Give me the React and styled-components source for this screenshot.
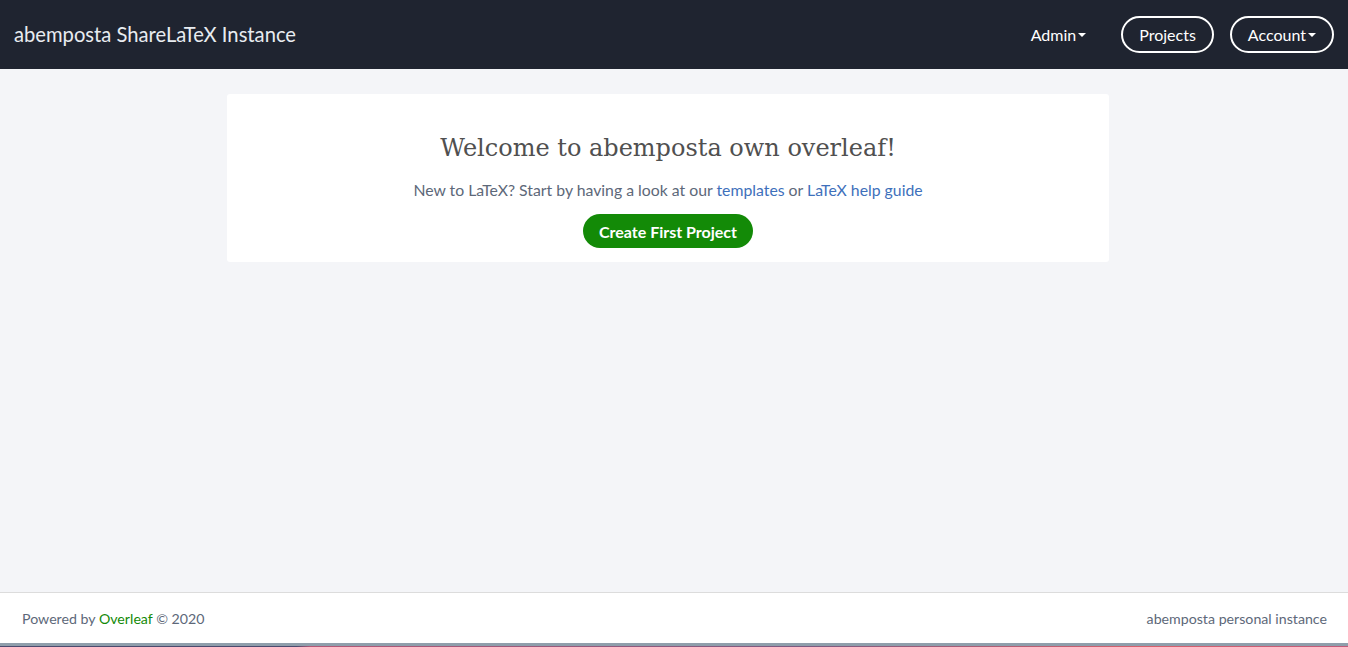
import React from "react";
import styled, { createGlobalStyle } from "styled-components";

const GlobalStyle = createGlobalStyle`
    html, body {
        margin: 0;
        padding: 0;
        height: 100%;
    }
    body {
        font-family: Lato, "Open Sans", sans-serif;
        background-color: #f4f5f8;
    }
    #root {
        height: 100%;
    }
`

const Page = styled.div`
    height: 647px;
    display: flex;
    flex-direction: column;
    overflow: hidden;
`

const Navbar = styled.nav`
    height: 69px;
    flex-shrink: 0;
    background-color: #1f2430;
    display: flex;
    align-items: center;
    justify-content: space-between;
    padding: 0 14px;
    box-sizing: border-box;
`

const Brand = styled.a`
    color: #e8ecf0;
    font-size: 20.2px;
    text-decoration: none;
    margin-top: -2px;
`

const NavList = styled.div`
    display: flex;
    align-items: center;
    gap: 16px;
`

const NavItem = styled.a`
    color: #ffffff;
    font-size: 16px;
    text-decoration: none;
    display: flex;
    align-items: center;
    height: 37px;
    box-sizing: border-box;
    padding: 0 ${p => (p.$outlined ? "16px" : "17px")};
    border: 2px solid ${p => (p.$outlined ? "#ffffff" : "transparent")};
    border-radius: 19px;
`

const Caret = styled.span`
    display: inline-block;
    width: 0;
    height: 0;
    margin-left: 2px;
    margin-top: 1px;
    border-top: 4px solid #ffffff;
    border-left: 4px solid transparent;
    border-right: 4px solid transparent;
`

const Main = styled.main`
    flex: 1;
    display: flex;
    justify-content: center;
    padding: 25px 12px 0 0;
`

const Card = styled.section`
    width: 882px;
    height: 168px;
    box-sizing: border-box;
    background-color: #ffffff;
    border-radius: 3px;
    display: flex;
    flex-direction: column;
    align-items: center;
    padding-top: 37px;
`

const Title = styled.h1`
    margin: 0;
    font-family: "DejaVu Serif", "Liberation Serif", serif;
    font-weight: normal;
    font-size: 24px;
    line-height: 34px;
    color: #505050;
`

const Lead = styled.p`
    margin: 15px 0 0;
    font-size: 15.8px;
    line-height: 20px;
    color: #5d6879;
`

const Link = styled.a`
    color: #3e70bb;
    text-decoration: none;
`

const PrimaryButton = styled.button`
    margin-top: 14px;
    height: 34px;
    padding: 0 16px;
    border: none;
    border-radius: 17px;
    background-color: #138a07;
    color: #ffffff;
    font-family: Lato, sans-serif;
    font-weight: bold;
    font-size: 16px;
    cursor: pointer;
`

const Footer = styled.footer`
    height: 50px;
    flex-shrink: 0;
    background-color: #ffffff;
    border-top: 1px solid #dcdcdc;
    display: flex;
    align-items: center;
    justify-content: space-between;
    padding: 0 21px 0 22px;
    font-size: 14.2px;
    color: #5d6879;
`

const GreenLink = styled.a`
    color: #138a07;
    text-decoration: none;
`

const BottomEdge = styled.div`
    height: 4px;
    flex-shrink: 0;
    border-top: 3px solid #8f9eab;
    background: linear-gradient(90deg, #4c4a6e 0%, #4c4a6e 22%, #b45776 23%, #7c5a80 60%, #d9606b 85%, #c05a7a 100%);
    box-sizing: border-box;
`

const App = () => {
    return (
        <Page>
            <GlobalStyle />
            <Navbar>
                <Brand href="#">abemposta ShareLaTeX Instance</Brand>
                <NavList>
                    <NavItem href="#">Admin<Caret /></NavItem>
                    <NavItem href="#" $outlined>Projects</NavItem>
                    <NavItem href="#" $outlined>Account<Caret /></NavItem>
                </NavList>
            </Navbar>
            <Main>
                <Card>
                    <Title>Welcome to abemposta own overleaf!</Title>
                    <Lead>
                        New to LaTeX? Start by having a look at our <Link href="#">templates</Link> or <Link href="#">LaTeX help guide</Link>
                    </Lead>
                    <PrimaryButton>Create First Project</PrimaryButton>
                </Card>
            </Main>
            <Footer>
                <span>Powered by <GreenLink href="#">Overleaf</GreenLink> © 2020</span>
                <span>abemposta personal instance</span>
            </Footer>
            <BottomEdge />
        </Page>
    )
}

export default App;
